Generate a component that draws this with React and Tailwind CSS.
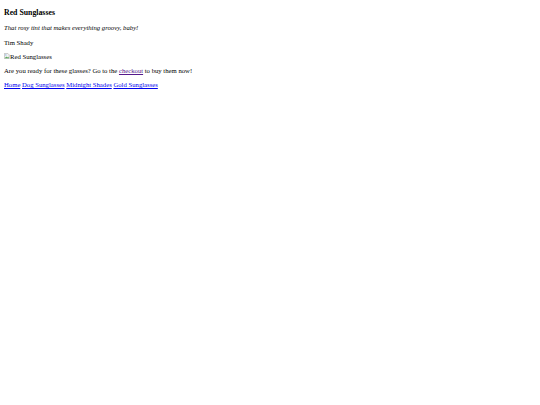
import React from 'react';

function BrokenImage() {
  return (
    <svg width="6" height="6" viewBox="0 0 16 16" className="inline-block align-baseline">
      <path d="M1 1h9l4 4v10H1z" fill="#f2f2f2" stroke="#9a9a9a" strokeWidth="1.4" />
      <path d="M2 14l4-5 3 3 2-2 3 4z" fill="#5aa85a" />
      <circle cx="5" cy="5" r="1.6" fill="#6fa8dc" />
    </svg>
  );
}

export default function App() {
  return (
    <div className="min-h-[405px] bg-white pt-[6px] pl-1 text-black text-[6.7px] leading-[14px]" style={{ fontFamily: '"Liberation Serif", "Times New Roman", serif' }}>
      <h3 className="font-bold text-[7.8px]">Red Sunglasses</h3>
      <p className="italic leading-[16px]">That rosy tint that makes everything groovy, baby!</p>
      <p>Tim Shady</p>
      <p>
        <BrokenImage />
        <span>Red Sunglasses</span>
      </p>
      <p>
        Are you ready for these glasses? Go to the{' '}
        <a href="#" className="underline text-[#551a8b]">checkout</a> to buy them now!
      </p>
      <p className="text-[#0000ee]">
        <a href="#" className="underline">Home</a>{' '}
        <a href="#" className="underline">Dog Sunglasses</a>{' '}
        <a href="#" className="underline">Midnight Shades</a>{' '}
        <a href="#" className="underline">Gold Sunglasses</a>
      </p>
    </div>
  );
}
